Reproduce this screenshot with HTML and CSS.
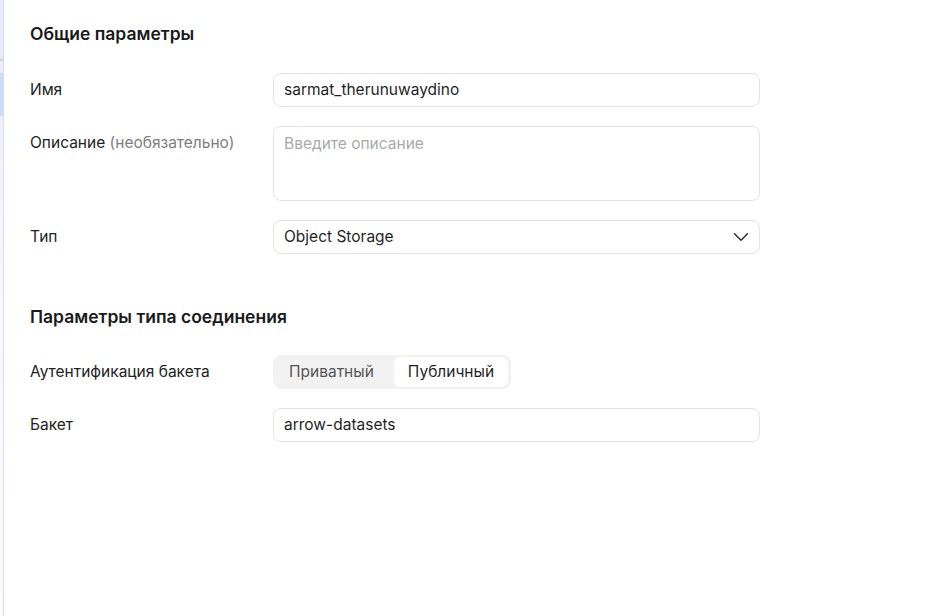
FILE: index.html
```html
<!DOCTYPE html>
<html lang="ru">
<head>
<meta charset="utf-8">
<title>Параметры</title>
<link rel="stylesheet" href="styles.css">
</head>
<body>
<div class="page">
  <aside class="strip">
    <div class="strip-a"></div>
    <div class="strip-sep"></div>
    <div class="strip-b"></div>
    <div class="strip-c"></div>
    <div class="strip-d"></div>
  </aside>
  <main class="content">
    <h2 class="section-title">Общие параметры</h2>
    <div class="form">
      <div class="label">Имя</div>
      <div class="field"><div class="input">sarmat_therunuwaydino</div></div>

      <div class="label">Описание <span class="muted">(необязательно)</span></div>
      <div class="field"><div class="textarea placeholder">Введите описание</div></div>

      <div class="label">Тип</div>
      <div class="field">
        <div class="input select">
          <span>Object Storage</span>
          <svg class="chevron" width="16" height="16" viewBox="0 0 16 16"><path d="M1.5 4.8 L8 11.2 L14.5 4.8" fill="none" stroke="#262626" stroke-width="1.4" stroke-linecap="round" stroke-linejoin="round"/></svg>
        </div>
      </div>
    </div>

    <h2 class="section-title second">Параметры типа соединения</h2>
    <div class="form">
      <div class="label">Аутентификация бакета</div>
      <div class="field">
        <div class="segmented">
          <div class="seg-item">Приватный</div>
          <div class="seg-item active">Публичный</div>
        </div>
      </div>

      <div class="label">Бакет</div>
      <div class="field"><div class="input">arrow-datasets</div></div>
    </div>
  </main>
</div>
</body>
</html>
```

FILE: styles.css
```css
html, body {
  margin: 0;
  padding: 0;
  background: #fff;
}
body {
  font-family: Inter, "Noto Sans", sans-serif;
  color: #1f1f1f;
  width: 940px;
  height: 616px;
  overflow: hidden;
}
.page {
  display: flex;
  height: 616px;
}
.strip {
  width: 3px;
  border-right: 1px solid #dcdde2;
  display: flex;
  flex-direction: column;
  flex-shrink: 0;
}
.strip-a { height: 59px; background: #e7eaf8; }
.strip-sep { height: 2px; background: #d0d3dc; }
.strip-b { height: 12px; background: #e8ecfb; }
.strip-c { height: 43px; background: #cddbfb; }
.strip-d { flex: 1; background: linear-gradient(#edf1fc, #f8f9fd 40%, #fbfbfd); }

.content {
  flex: 1;
  padding: 22px 0 0 26px;
}
.section-title {
  margin: 0;
  font-size: 17.5px;
  line-height: 24px;
  font-weight: 560;
  color: #1a1a1a;
}
.section-title.second {
  margin-top: 51px;
}
.form {
  display: grid;
  grid-template-columns: 243px 487px;
  row-gap: 19px;
  margin-top: 27px;
}
.section-title.second + .form {
  margin-top: 26px;
}
.label {
  font-size: 15.5px;
  line-height: 34px;
  color: #222;
}
.muted {
  color: #7d7d7d;
}
.input, .textarea {
  box-sizing: border-box;
  border: 1px solid #e3e3e3;
  border-radius: 8px;
  font-size: 15.5px;
  color: #1f1f1f;
  padding: 0 10px;
}
.input {
  height: 34px;
  line-height: 32px;
}
.textarea {
  height: 75px;
  padding-top: 8px;
  line-height: 18px;
}
.placeholder {
  color: #a9a9a9;
}
.select {
  display: flex;
  align-items: center;
  justify-content: space-between;
  padding-right: 10px;
}
.chevron {
  display: block;
}
.segmented {
  display: inline-flex;
  gap: 6px;
  background: #f2f2f2;
  border-radius: 8px;
  padding: 2px 3px 2px 2px;
  height: 34px;
  box-sizing: border-box;
}
.seg-item {
  font-size: 15.5px;
  line-height: 30px;
  padding: 0 14px;
  color: #555;
  border-radius: 6px;
}
.seg-item.active {
  background: #fff;
  color: #1f1f1f;
}
```
